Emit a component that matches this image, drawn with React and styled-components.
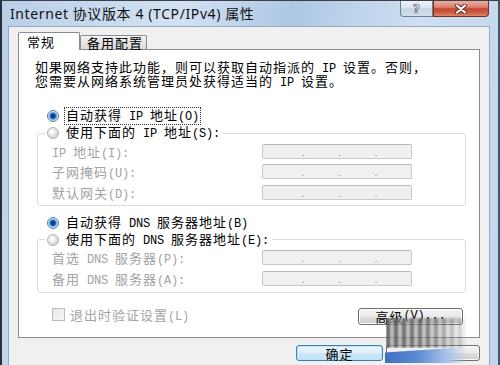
import React from 'react';
import styled, { createGlobalStyle } from 'styled-components';

const Global = createGlobalStyle`
  html, body { margin: 0; padding: 0; background: #ffffff; }
  body { width: 500px; height: 365px; overflow: hidden; }
  * { box-sizing: border-box; }
`;

const Window = styled.div`
  position: relative;
  width: 500px;
  height: 365px;
  overflow: hidden;
  display: flex;
  flex-direction: column;
  border-left: 2px solid #2b3038;
  border-right: 2px solid #4a5564;
  border-top: 1px solid #3b4049;
  background: linear-gradient(100deg, #b9cfe8 0%, #d2e2f3 32%, #aec8e4 52%, #cddff1 75%, #c0d5ec 100%);
  font-family: "Noto Sans CJK SC", sans-serif;
  color: #000;
`;

const TitleBar = styled.div`
  flex: none;
  height: 25px;
  display: flex;
  align-items: flex-start;
  justify-content: space-between;
`;

const Title = styled.div`
  font-family: "Noto Sans", "Noto Sans CJK SC", sans-serif;
  font-size: 14px;
  letter-spacing: 0.6px;
  line-height: 25px;
  padding-left: 8px;
  color: #111;
  white-space: nowrap;
`;

const Caption = styled.div`
  display: flex;
  margin-right: 9px;
`;

const CapButton = styled.div`
  width: ${(p) => p.$w}px;
  height: 16px;
  display: flex;
  align-items: center;
  justify-content: center;
  border: 1px solid ${(p) => (p.$close ? '#7a2b22' : '#6f7f94')};
  border-top: none;
  border-radius: ${(p) => (p.$close ? '0 0 4px 0' : '0 0 0 4px')};
  background: ${(p) =>
    p.$close
      ? 'linear-gradient(180deg, #eab0a2 0%, #d8806b 42%, #c3452e 52%, #cd5f45 80%, #e08a6a 100%)'
      : 'linear-gradient(180deg, #f0f4f9 0%, #dde6f1 42%, #c5d4e6 52%, #d2dfee 100%)'};
`;

const HelpGlyph = styled.span`
  font-family: "DejaVu Sans", sans-serif;
  font-weight: bold;
  font-size: 12px;
  line-height: 12px;
  color: #f5f8fb;
  -webkit-text-stroke: 0.7px #56667b;
`;

const Body = styled.div`
  flex: 1;
  margin: 0 8px 0 6px;
  padding: 5px 0 0 9px;
  background: #f0f0f0;
  border: 1px solid #97aac2;
  border-bottom: none;
  display: flex;
  flex-direction: column;
`;

const TabStrip = styled.div`
  height: 17px;
  display: flex;
  align-items: flex-end;
`;

const Tab = styled.div`
  position: relative;
  z-index: ${(p) => (p.$active ? 1 : 0)};
  width: ${(p) => p.$w}px;
  height: ${(p) => (p.$active ? 18 : 14)}px;
  margin-bottom: ${(p) => (p.$active ? -1 : 0)}px;
  padding-left: ${(p) => (p.$active ? 8 : 6)}px;
  border: 1px solid #898c95;
  border-bottom: none;
  border-radius: 2px 2px 0 0;
  background: ${(p) => (p.$active ? '#ffffff' : 'linear-gradient(180deg, #f4f4f4 0%, #e6e6e6 50%, #dadada 100%)')};
  font-size: 13px;
  letter-spacing: 1px;
  line-height: ${(p) => (p.$active ? 17 : 13)}px;
  white-space: nowrap;
`;

const Panel = styled.div`
  width: 462px;
  height: 289px;
  background: #ffffff;
  border: 1px solid #898c95;
  padding: 11px 0 0 16px;
  display: flex;
  flex-direction: column;
`;

const Paragraph = styled.p`
  margin: 0;
  height: 24px;
  font-size: 13px;
  letter-spacing: 1px;
  line-height: 12px;
  white-space: nowrap;
`;

const Latin = styled.span`
  font-family: "Liberation Mono", monospace;
  font-size: 12px;
  letter-spacing: -0.2px;
  white-space: pre;
`;

const RadioRow = styled.div`
  height: 16px;
  display: flex;
  align-items: center;
  gap: 6px;
  margin-top: ${(p) => p.$mt || 0}px;
  margin-left: ${(p) => p.$ml || 0}px;
`;

const Radio = styled.span`
  flex: none;
  width: 12px;
  height: 12px;
  border-radius: 50%;
  border: 1px solid ${(p) => (p.$checked ? '#5f7d9c' : '#b2b2b2')};
  background: ${(p) =>
    p.$checked
      ? 'radial-gradient(circle at 50% 50%, #0d3f7c 0 1.8px, #2f7fd0 2.8px, #8fc4ec 4px, #e6f1fb 5px)'
      : 'radial-gradient(circle at 40% 38%, #ffffff 0 1px, #ececec 3px, #d2d2d2 6px)'};
`;

const RadioText = styled.span`
  font-size: 13px;
  letter-spacing: 1px;
  line-height: 14px;
  white-space: nowrap;
  padding: 0 1px;
  outline: ${(p) => (p.$focus ? '1px dotted #333' : 'none')};
`;

const Group = styled.fieldset`
  width: 429px;
  margin: 1px 0 0 2px;
  padding: 0 0 ${(p) => p.$pb}px 7px;
  border: 1px solid #d9dde2;
  border-radius: 3px;
`;

const Legend = styled.legend`
  padding: 0 2px;
  height: 16px;
`;

const FieldRow = styled.div`
  height: 20.5px;
  display: grid;
  grid-template-columns: 210px 150px;
  align-items: center;
  padding-left: 7px;
`;

const Label = styled.span`
  font-size: 13px;
  letter-spacing: 1px;
  color: #a3a3a3;
  white-space: nowrap;
`;

const IpBox = styled.div`
  height: 15px;
  display: flex;
  justify-content: space-evenly;
  align-items: flex-end;
  padding-left: 5px;
  background: #f0f0f0;
  border: 1px solid #c9c9c9;
  border-top-color: #b9b9b9;
  border-radius: 2px;
`;

const Dot = styled.span`
  font-family: "Liberation Sans", sans-serif;
  font-size: 11px;
  line-height: 11px;
  color: #9a9a9a;
`;

const BottomRow = styled.div`
  margin-top: 14px;
  padding-right: 16px;
  display: flex;
  justify-content: space-between;
  align-items: flex-start;
`;

const CheckLine = styled.div`
  margin-left: 17px;
  height: 15px;
  display: flex;
  align-items: center;
  gap: 5px;
`;

const CheckBox = styled.span`
  width: 13px;
  height: 13px;
  border: 1px solid #bcbcbc;
  background: linear-gradient(135deg, #e6e6e6, #f8f8f8);
`;

const Button = styled.div`
  width: ${(p) => p.$w}px;
  height: ${(p) => p.$h}px;
  margin-top: ${(p) => p.$mt || 0}px;
  display: flex;
  align-items: center;
  justify-content: center;
  border: 1px solid ${(p) => (p.$default ? '#3c7fb1' : '#707070')};
  border-radius: 3px;
  background: ${(p) =>
    p.$default
      ? 'linear-gradient(180deg, #eef7fd 0%, #deeffa 48%, #cde6f7 52%, #c2e0f5 100%)'
      : 'linear-gradient(180deg, #f4f4f4 0%, #ebebeb 48%, #dddddd 52%, #cfcfcf 100%)'};
  box-shadow: inset 0 0 0 1px ${(p) => (p.$default ? '#bfe4f8' : '#fbfbfb')};
  font-size: 13px;
  letter-spacing: 1px;
  line-height: 13px;
  white-space: nowrap;
`;

const Footer = styled.div`
  margin-top: 7px;
  padding-right: 9px;
  display: flex;
  justify-content: flex-end;
  gap: 3px;
`;

const Smudge = styled.div`
  position: absolute;
  left: 384px;
  top: 317px;
  width: 80px;
  height: 30px;
  background: repeating-linear-gradient(90deg, rgba(85, 85, 85, 0.9) 0 4px, rgba(165, 165, 165, 0.7) 4px 8px);
  -webkit-mask-image: linear-gradient(90deg, #000 0%, rgba(0, 0, 0, 0.85) 50%, rgba(0, 0, 0, 0.2) 100%);
  mask-image: linear-gradient(90deg, #000 0%, rgba(0, 0, 0, 0.85) 50%, rgba(0, 0, 0, 0.2) 100%);
  filter: blur(1px);
`;

const Glare = styled.div`
  position: absolute;
  left: 383px;
  top: 346px;
  width: 82px;
  height: 16px;
  background: linear-gradient(90deg, #3f70c2 0%, #5d8bd4 40%, #a9c2e6 75%, rgba(220, 226, 235, 0) 100%);
  clip-path: polygon(0 35%, 100% 0, 100% 100%, 0 100%);
  filter: blur(0.6px);
`;

const isLatin = (s) => /^[\x20-\x7E]+$/.test(s);

function Mixed({ text }) {
  return text
    .split(/([\x20-\x7E]+)/)
    .filter(Boolean)
    .map((part, i) =>
      isLatin(part) ? <Latin key={i}>{part}</Latin> : <React.Fragment key={i}>{part}</React.Fragment>
    );
}

function IpField() {
  return (
    <IpBox>
      <Dot>.</Dot>
      <Dot>.</Dot>
      <Dot>.</Dot>
    </IpBox>
  );
}

function Field({ label }) {
  return (
    <FieldRow>
      <Label>
        <Mixed text={label} />
      </Label>
      <IpField />
    </FieldRow>
  );
}

function Close() {
  return (
    <svg width="16" height="10" viewBox="0 0 16 10">
      <path d="M4 1.5 L12 8.5 M12 1.5 L4 8.5" stroke="#5a2a24" strokeWidth="4" strokeLinecap="round" />
      <path d="M4 1.5 L12 8.5 M12 1.5 L4 8.5" stroke="#ffffff" strokeWidth="2.2" strokeLinecap="round" />
    </svg>
  );
}

export default function App() {
  return (
    <>
      <Global />
      <Window>
        <TitleBar>
          <Title>Internet 协议版本 4 (TCP/IPv4) 属性</Title>
          <Caption>
            <CapButton $w={33}>
              <HelpGlyph>?</HelpGlyph>
            </CapButton>
            <CapButton $w={56} $close>
              <Close />
            </CapButton>
          </Caption>
        </TitleBar>
        <Body>
          <TabStrip>
            <Tab $active $w={62}>常规</Tab>
            <Tab $w={67}>备用配置</Tab>
          </TabStrip>
          <Panel>
            <Paragraph>
              <Mixed text="如果网络支持此功能，则可以获取自动指派的 IP 设置。否则，" />
              <br />
              <Mixed text="您需要从网络系统管理员处获得适当的 IP 设置。" />
            </Paragraph>
            <RadioRow $mt={23} $ml={12}>
              <Radio $checked />
              <RadioText $focus>
                <Mixed text="自动获得 IP 地址(O)" />
              </RadioText>
            </RadioRow>
            <Group $pb={2}>
              <Legend>
                <RadioRow>
                  <Radio />
                  <RadioText>
                    <Mixed text="使用下面的 IP 地址(S):" />
                  </RadioText>
                </RadioRow>
              </Legend>
              <Field label="IP 地址(I):" />
              <Field label="子网掩码(U):" />
              <Field label="默认网关(D):" />
            </Group>
            <RadioRow $mt={9} $ml={12}>
              <Radio $checked />
              <RadioText>
                <Mixed text="自动获得 DNS 服务器地址(B)" />
              </RadioText>
            </RadioRow>
            <Group $pb={3}>
              <Legend>
                <RadioRow>
                  <Radio />
                  <RadioText>
                    <Mixed text="使用下面的 DNS 服务器地址(E):" />
                  </RadioText>
                </RadioRow>
              </Legend>
              <Field label="首选 DNS 服务器(P):" />
              <Field label="备用 DNS 服务器(A):" />
            </Group>
            <BottomRow>
              <CheckLine>
                <CheckBox />
                <Label>
                  <Mixed text="退出时验证设置(L)" />
                </Label>
              </CheckLine>
              <Button $w={105} $h={17} $mt={1}>
                <Mixed text="高级(V)..." />
              </Button>
            </BottomRow>
          </Panel>
          <Footer>
            <Button $w={87} $h={16} $default>确定</Button>
            <Button $w={94} $h={16} />
          </Footer>
        </Body>
        <Smudge />
        <Glare />
      </Window>
    </>
  );
}
